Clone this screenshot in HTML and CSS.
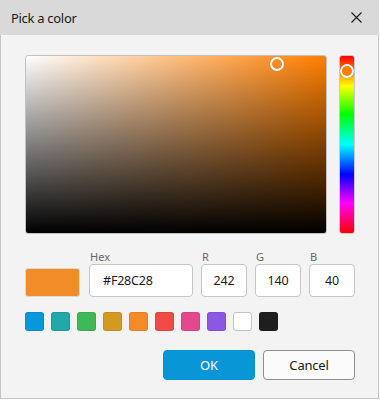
FILE: index.html
```html
<!DOCTYPE html>
<html>
<head>
	<meta charset="utf-8">
	<title>Pick a color</title>
	<link rel="stylesheet" href="styles.css">
</head>
<body>
	<div class="dialog">
		<header class="title_bar">
			<span class="title">Pick a color</span>
			<svg class="close" width="11" height="11" viewBox="0 0 11 11">
				<path d="M0.5 0.5 L10.5 10.5 M10.5 0.5 L0.5 10.5" stroke="#1a1a1a" stroke-width="1.1" fill="none"/>
			</svg>
		</header>

		<div class="content">
			<div class="picker">
				<div class="sv_box">
					<span class="thumb sv_thumb"></span>
				</div>
				<div class="hue_bar">
					<span class="thumb hue_thumb"></span>
				</div>
			</div>

			<div class="values">
				<div class="preview"></div>
				<div class="field hex">
					<label>Hex</label>
					<div class="input left">#F28C28</div>
				</div>
				<div class="field">
					<label>R</label>
					<div class="input">242</div>
				</div>
				<div class="field">
					<label>G</label>
					<div class="input">140</div>
				</div>
				<div class="field">
					<label>B</label>
					<div class="input">40</div>
				</div>
			</div>

			<ul class="swatches">
				<li style="background:#0897d8"></li>
				<li style="background:#1fa9a9"></li>
				<li style="background:#3eb955"></li>
				<li style="background:#d39a22"></li>
				<li style="background:#f28c28"></li>
				<li style="background:#ef4a45"></li>
				<li style="background:#e5488c"></li>
				<li style="background:#8b58e4"></li>
				<li class="light" style="background:#ffffff"></li>
				<li style="background:#1e1e1e"></li>
			</ul>

			<div class="buttons">
				<button class="btn ok">OK</button>
				<button class="btn cancel">Cancel</button>
			</div>
		</div>
	</div>
</body>
</html>
```

FILE: styles.css
```css
*{margin: 0; padding: 0; box-sizing: border-box;}
html,body{background: #fff;}
body{font-family: "Noto Sans", "Open Sans", sans-serif; color: #1a1a1a;}

.dialog{width: 379px; height: 399px; background: #f3f3f3; border: 1px solid #c4c4c4; border-top: none;}

/* title */
.title_bar{height: 35px; background: #d9d9d9; display: flex; align-items: center; padding-left: 11px; padding-right: 17px; margin: 0 -1px;}
.title{font-size: 13px; letter-spacing: -0.3px; flex: 1;}
.close{display: block;}

.content{padding: 20px 23px 0 24px;}

/* saturation / value + hue */
.picker{display: flex; gap: 12px; height: 179px;}
.sv_box{position: relative; width: 302px; border: 1px solid #c2c2c2; border-radius: 3px;
	background: linear-gradient(to top, #000, rgba(0,0,0,0)), linear-gradient(to right, #fff, #ff7e00);}
.hue_bar{position: relative; width: 16px; border: 1px solid #c8c8c8; border-radius: 3px;
	background: linear-gradient(to bottom, #f00 0%, #ff0 17%, #0f0 33%, #0ff 50%, #00f 67%, #f0f 83%, #f00 100%);}
.thumb{position: absolute; width: 14px; height: 14px; border: 2px solid #fff; border-radius: 50%; box-shadow: 0 0 1px rgba(0,0,0,.4);}
.sv_thumb{left: 244px; top: 1px;}
.hue_thumb{left: 0; top: 8px; background: #ff7e00;}

/* value row */
.values{display: flex; align-items: flex-end; gap: 8px; margin-top: 16px;}
.preview{width: 55px; height: 29px; margin-right: 1px; background: #f28c28; border: 1px solid #d8d8d8; border-radius: 3px;}
.field{display: flex; flex-direction: column;}
.field label{font-size: 11px; line-height: 14px; color: #666; padding-left: 1px;}
.input{width: 46px; height: 33px; background: #fff; border: 1px solid #c6c6c6; border-radius: 4px; font-size: 12.5px; letter-spacing: -0.2px; line-height: 31px; text-align: center;}
.hex .input{width: 104px;}
.input.left{text-align: left; padding-left: 13px;}

/* swatches */
.swatches{list-style: none; display: flex; gap: 7px; margin-top: 15px;}
.swatches li{width: 19px; height: 19px; border-radius: 3px; border: 1px solid rgba(0,0,0,.08);}
.swatches li.light{border-color: #c4c4c4;}

/* buttons */
.buttons{display: flex; justify-content: flex-end; gap: 8px; margin-top: 19px;}
.btn{width: 92px; height: 30px; border-radius: 4px; font-family: inherit; font-size: 13px; letter-spacing: -0.2px;}
.ok{background: #0896d6; color: #fff; border: 1px solid #0890cf;}
.cancel{background: #fbfbfb; color: #1a1a1a; border: 1px solid #8e8e8e;}
```
